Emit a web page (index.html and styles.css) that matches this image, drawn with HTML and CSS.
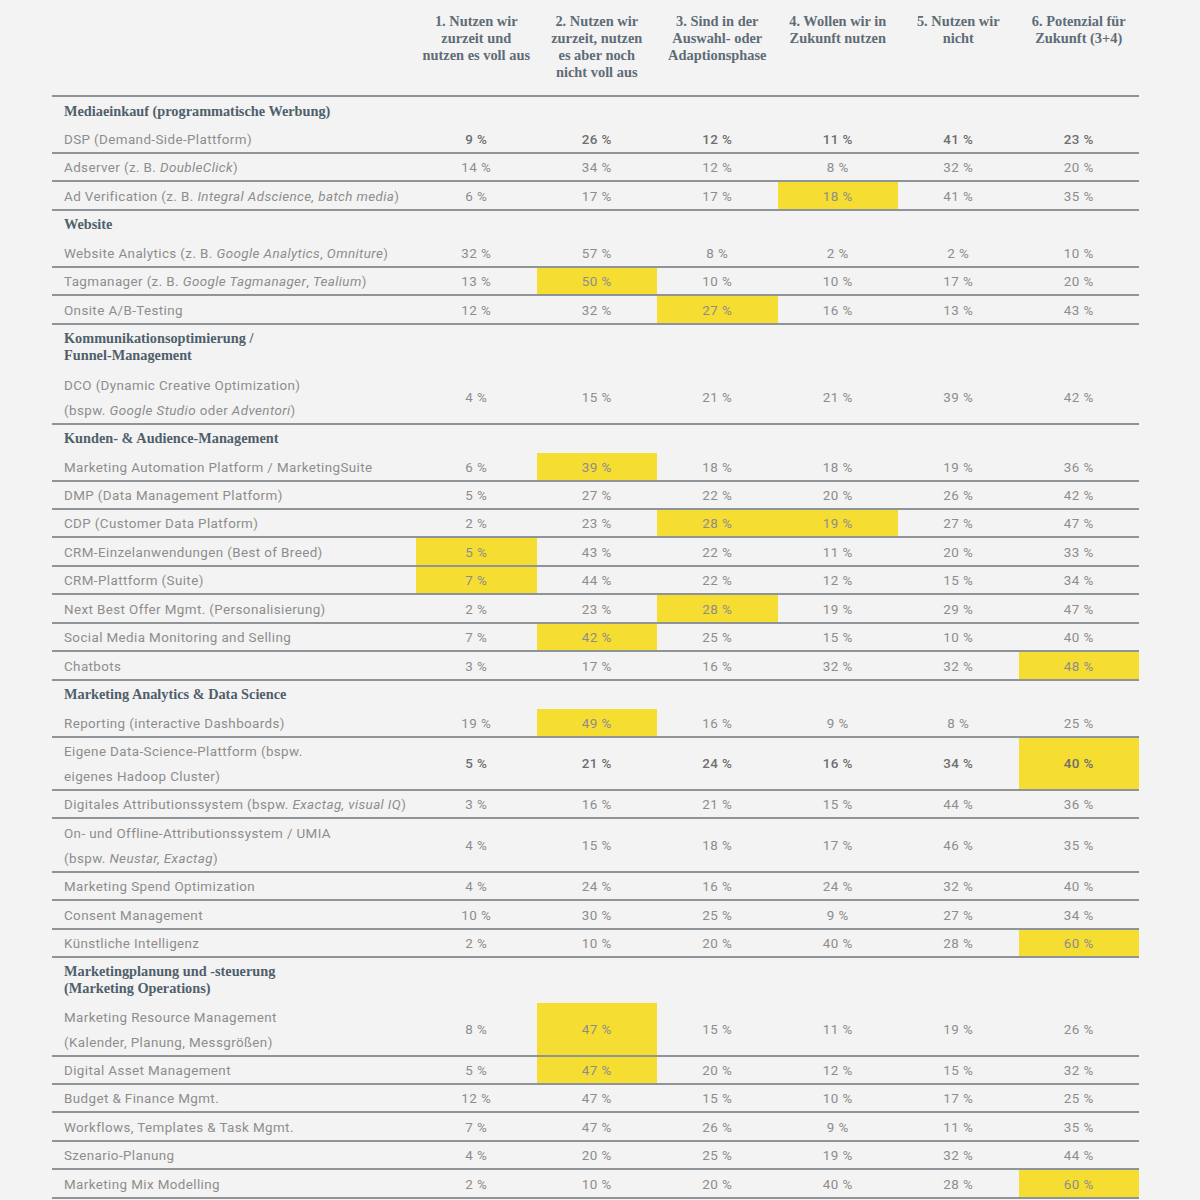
FILE: index.html
```html
<!DOCTYPE html>
<html lang="de">
<head>
<meta charset="utf-8">
<title>Tabelle</title>
<link rel="stylesheet" href="styles.css">
</head>
<body>
<div class="table">
  <div class="row head">
    <div></div>
    <div class="hc">1. Nutzen wir<br>zurzeit und<br>nutzen es voll aus</div>
    <div class="hc">2. Nutzen wir<br>zurzeit, nutzen<br>es aber noch<br>nicht voll aus</div>
    <div class="hc">3. Sind in der<br>Auswahl- oder<br>Adaptionsphase</div>
    <div class="hc">4. Wollen wir in<br>Zukunft nutzen</div>
    <div class="hc">5. Nutzen wir<br>nicht</div>
    <div class="hc">6. Potenzial für<br>Zukunft (3+4)</div>
  </div>

  <div class="sec">Mediaeinkauf (programmatische Werbung)</div>
  <div class="row dark"><div class="lb">DSP (Demand-Side-Plattform)</div><div>9 %</div><div>26 %</div><div>12 %</div><div>11 %</div><div>41 %</div><div>23 %</div></div>
  <div class="row"><div class="lb">Adserver (z. B. <i>DoubleClick</i>)</div><div>14 %</div><div>34 %</div><div>12 %</div><div>8 %</div><div>32 %</div><div>20 %</div></div>
  <div class="row"><div class="lb">Ad Verification (z. B. <i>Integral Adscience, batch media</i>)</div><div>6 %</div><div>17 %</div><div>17 %</div><div class="hl">18 %</div><div>41 %</div><div>35 %</div></div>

  <div class="sec">Website</div>
  <div class="row"><div class="lb">Website Analytics (z. B. <i>Google Analytics</i>, <i>Omniture</i>)</div><div>32 %</div><div>57 %</div><div>8 %</div><div>2 %</div><div>2 %</div><div>10 %</div></div>
  <div class="row"><div class="lb">Tagmanager (z. B. <i>Google Tagmanager</i>, <i>Tealium</i>)</div><div>13 %</div><div class="hl">50 %</div><div>10 %</div><div>10 %</div><div>17 %</div><div>20 %</div></div>
  <div class="row"><div class="lb">Onsite A/B-Testing</div><div>12 %</div><div>32 %</div><div class="hl">27 %</div><div>16 %</div><div>13 %</div><div>43 %</div></div>

  <div class="sec two">Kommunikationsoptimierung /<br>Funnel-Management</div>
  <div class="row"><div class="lb">DCO (Dynamic Creative Optimization)<br>(bspw. <i>Google Studio</i> oder <i>Adventori</i>)</div><div>4 %</div><div>15 %</div><div>21 %</div><div>21 %</div><div>39 %</div><div>42 %</div></div>

  <div class="sec">Kunden- &amp; Audience-Management</div>
  <div class="row"><div class="lb">Marketing Automation Platform / MarketingSuite</div><div>6 %</div><div class="hl">39 %</div><div>18 %</div><div>18 %</div><div>19 %</div><div>36 %</div></div>
  <div class="row"><div class="lb">DMP (Data Management Platform)</div><div>5 %</div><div>27 %</div><div>22 %</div><div>20 %</div><div>26 %</div><div>42 %</div></div>
  <div class="row"><div class="lb">CDP (Customer Data Platform)</div><div>2 %</div><div>23 %</div><div class="hl">28 %</div><div class="hl">19 %</div><div>27 %</div><div>47 %</div></div>
  <div class="row"><div class="lb">CRM-Einzelanwendungen (Best of Breed)</div><div class="hl">5 %</div><div>43 %</div><div>22 %</div><div>11 %</div><div>20 %</div><div>33 %</div></div>
  <div class="row"><div class="lb">CRM-Plattform (Suite)</div><div class="hl">7 %</div><div>44 %</div><div>22 %</div><div>12 %</div><div>15 %</div><div>34 %</div></div>
  <div class="row"><div class="lb">Next Best Offer Mgmt. (Personalisierung)</div><div>2 %</div><div>23 %</div><div class="hl">28 %</div><div>19 %</div><div>29 %</div><div>47 %</div></div>
  <div class="row"><div class="lb">Social Media Monitoring and Selling</div><div>7 %</div><div class="hl">42 %</div><div>25 %</div><div>15 %</div><div>10 %</div><div>40 %</div></div>
  <div class="row"><div class="lb">Chatbots</div><div>3 %</div><div>17 %</div><div>16 %</div><div>32 %</div><div>32 %</div><div class="hl">48 %</div></div>

  <div class="sec">Marketing Analytics &amp; Data Science</div>
  <div class="row"><div class="lb">Reporting (interactive Dashboards)</div><div>19 %</div><div class="hl">49 %</div><div>16 %</div><div>9 %</div><div>8 %</div><div>25 %</div></div>
  <div class="row dark"><div class="lb">Eigene Data-Science-Plattform (bspw.<br>eigenes Hadoop Cluster)</div><div>5 %</div><div>21 %</div><div>24 %</div><div>16 %</div><div>34 %</div><div class="hl">40 %</div></div>
  <div class="row"><div class="lb">Digitales Attributionssystem (bspw. <i>Exactag, visual IQ</i>)</div><div>3 %</div><div>16 %</div><div>21 %</div><div>15 %</div><div>44 %</div><div>36 %</div></div>
  <div class="row"><div class="lb">On- und Offline-Attributionssystem / UMIA<br>(bspw. <i>Neustar, Exactag</i>)</div><div>4 %</div><div>15 %</div><div>18 %</div><div>17 %</div><div>46 %</div><div>35 %</div></div>
  <div class="row"><div class="lb">Marketing Spend Optimization</div><div>4 %</div><div>24 %</div><div>16 %</div><div>24 %</div><div>32 %</div><div>40 %</div></div>
  <div class="row"><div class="lb">Consent Management</div><div>10 %</div><div>30 %</div><div>25 %</div><div>9 %</div><div>27 %</div><div>34 %</div></div>
  <div class="row"><div class="lb">Künstliche Intelligenz</div><div>2 %</div><div>10 %</div><div>20 %</div><div>40 %</div><div>28 %</div><div class="hl">60 %</div></div>

  <div class="sec two short">Marketingplanung und -steuerung<br>(Marketing Operations)</div>
  <div class="row"><div class="lb">Marketing Resource Management<br>(Kalender, Planung, Messgrößen)</div><div>8 %</div><div class="hl">47 %</div><div>15 %</div><div>11 %</div><div>19 %</div><div>26 %</div></div>
  <div class="row"><div class="lb">Digital Asset Management</div><div>5 %</div><div class="hl">47 %</div><div>20 %</div><div>12 %</div><div>15 %</div><div>32 %</div></div>
  <div class="row"><div class="lb">Budget &amp; Finance Mgmt.</div><div>12 %</div><div>47 %</div><div>15 %</div><div>10 %</div><div>17 %</div><div>25 %</div></div>
  <div class="row"><div class="lb">Workflows, Templates &amp; Task Mgmt.</div><div>7 %</div><div>47 %</div><div>26 %</div><div>9 %</div><div>11 %</div><div>35 %</div></div>
  <div class="row"><div class="lb">Szenario-Planung</div><div>4 %</div><div>20 %</div><div>25 %</div><div>19 %</div><div>32 %</div><div>44 %</div></div>
  <div class="row"><div class="lb">Marketing Mix Modelling</div><div>2 %</div><div>10 %</div><div>20 %</div><div>40 %</div><div>28 %</div><div class="hl">60 %</div></div>
</div>
</body>
</html>
```
FILE: styles.css
```css
html, body {
  margin: 0;
  padding: 0;
  background: #f3f3f3;
}
body {
  font-family: Roboto, "Liberation Sans", sans-serif;
  color: #8d8d8d;
}
.table {
  width: 1087px;
  margin-left: 52px;
}
.row {
  display: grid;
  grid-template-columns: 364px repeat(6, 120.5px);
  border-bottom: 2px solid #8f9499;
  font-size: 13.4px;
  letter-spacing: 0.4px;
  line-height: 25px;
}
.row > div {
  padding: 1.45px 0 0;
  text-align: center;
  align-self: stretch;
  display: flex;
  align-items: center;
  justify-content: center;
}
.row > div.lb {
  text-align: left;
  justify-content: flex-start;
  padding-left: 12px;
  display: block;
}
.row > div.hl {
  background: #f6dd32;
}
.row.dark > div:not(.lb) {
  color: #6e6e6e;
  font-weight: 500;
}
.head {
  font-family: "Liberation Serif", serif;
  font-weight: bold;
  font-size: 14.4px;
  letter-spacing: 0;
  line-height: 17px;
  color: #5f6c76;
}
.head > div {
  padding: 12.5px 0 14.5px;
  display: block;
}
.sec {
  font-family: "Liberation Serif", serif;
  font-weight: bold;
  font-size: 14.3px;
  line-height: 17px;
  color: #4f5f6b;
  padding: 5.5px 0 6px 12px;
}
.sec.two {
  padding-bottom: 7px;
}
.sec.two.short {
  padding-top: 5px;
  padding-bottom: 6px;
}
i {
  font-style: italic;
}
```
